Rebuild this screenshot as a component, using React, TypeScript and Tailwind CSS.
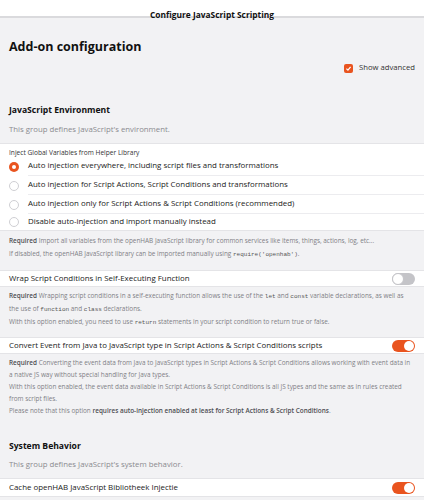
import type { ReactNode } from 'react';

const code = "font-['Liberation_Mono',monospace] text-[6px] leading-none text-[#555]";

function Radio({ checked }: { checked?: boolean }) {
  if (checked) {
    return <span className="w-[10px] h-[10px] rounded-full bg-[#e9541f] flex items-center justify-center shrink-0"><span className="w-[4px] h-[4px] rounded-full bg-white" /></span>;
  }
  return <span className="w-[10px] h-[10px] rounded-full border border-[#cfcfd3] bg-white shrink-0" />;
}

function Toggle({ on }: { on?: boolean }) {
  if (on) {
    return (
      <span className="w-[23px] h-[12px] rounded-full bg-[#e9541f] flex items-center justify-end pr-[1px]">
        <span className="w-[10px] h-[10px] rounded-full bg-white" />
      </span>
    );
  }
  return (
    <span className="w-[23px] h-[12px] rounded-full bg-[#c4c4c8] flex items-center">
      <span className="w-[12px] h-[12px] rounded-full bg-white border border-[#c4c4c8]" />
    </span>
  );
}

function ToggleRow({ label, on }: { label: string; on?: boolean }) {
  return (
    <div className="h-[17px] bg-white border-y border-[#e4e4e7] flex items-center justify-between pl-[9px] pr-[9px]">
      <span className="text-[7.9px] text-[#222]">{label}</span>
      <Toggle on={on} />
    </div>
  );
}

function Info({ lines, leading }: { lines: ReactNode[]; leading: string }) {
  return (
    <div className={`pl-[9px] text-[6.4px] text-[#808085] ${leading}`}>
      {lines.map((l, i) => (
        <div key={i} className="whitespace-nowrap">{l}</div>
      ))}
    </div>
  );
}

const options = [
  'Auto injection everywhere, including script files and transformations',
  'Auto injection for Script Actions, Script Conditions and transformations',
  'Auto injection only for Script Actions & Script Conditions (recommended)',
  'Disable auto-injection and import manually instead',
];

export default function App() {
  const req = <b className="font-semibold text-[#4d4d52]">Required</b>;

  return (
    <div className="w-[424px] h-[500px] overflow-hidden bg-[#f2f2f4] font-['Open_Sans',sans-serif] text-[#222]">
      {/* title bar */}
      <div className="h-[18px] bg-white border-b-2 border-[#dadadd] text-center">
        <span className="text-[8.4px] font-bold leading-[13px] text-[#111]">Configure JavaScript Scripting</span>
      </div>

      <div className="mt-[20px] pl-[9px] text-[12.5px] font-bold leading-[18px] text-[#111]">Add-on configuration</div>

      <div className="mt-[6px] h-[12px] flex items-center justify-end gap-[6px] pr-[9px]">
        <span className="w-[9px] h-[9px] rounded-[2px] bg-[#e9541f] flex items-center justify-center">
          <svg width="7" height="7" viewBox="0 0 10 10">
            <path d="M2 5.2 L4.2 7.4 L8 2.8" fill="none" stroke="white" strokeWidth="1.8" />
          </svg>
        </span>
        <span className="text-[7.7px] text-[#333]">Show advanced</span>
      </div>

      {/* JavaScript Environment */}
      <div className="mt-[29px] pl-[9px] text-[8.6px] font-bold leading-[14px] text-[#111]">JavaScript Environment</div>
      <div className="mt-[6px] pl-[9px] text-[7.8px] leading-[12px] text-[#8a8a8f]">This group defines JavaScript's environment.</div>

      <div className="mt-[8px] bg-white border-y border-[#e4e4e7]">
        <div className="pt-[4px] pl-[9px] text-[6.6px] leading-[9px] text-[#333]">Inject Global Variables from Helper Library</div>
        {options.map((o, i) => (
          <div key={o} className={`flex items-center ${i === 3 ? 'h-[16px]' : 'h-[19px]'}`}>
            <span className="w-[28px] pl-[9px] flex items-center shrink-0">
              <Radio checked={i === 0} />
            </span>
            <span className={`flex-1 h-full flex items-center text-[7.9px] text-[#222] ${i < 3 ? 'border-b border-[#ececef]' : ''}`}>{o}</span>
          </div>
        ))}
      </div>

      <div className="pt-[4px]">
        <Info
          leading="leading-[12.5px]"
          lines={[
            <>{req} Import all variables from the openHAB JavaScript library for common services like items, things, actions, log, etc...</>,
            <>If disabled, the openHAB JavaScript library can be imported manually using <span className={code}>require('openhab')</span>.</>,
          ]}
        />
      </div>

      <div className="mt-[10px]">
        <ToggleRow label="Wrap Script Conditions in Self-Executing Function" />
      </div>
      <div className="pt-[2px]">
        <Info
          leading="leading-[13px]"
          lines={[
            <>{req} Wrapping script conditions in a self-executing function allows the use of the <span className={code}>let</span> and <span className={code}>const</span> variable declarations, as well as</>,
            <>the use of <span className={code}>function</span> and <span className={code}>class</span> declarations.</>,
            <>With this option enabled, you need to use <span className={code}>return</span> statements in your script condition to return true or false.</>,
          ]}
        />
      </div>

      <div className="mt-[9px]">
        <ToggleRow label="Convert Event from Java to JavaScript type in Script Actions & Script Conditions scripts" on />
      </div>
      <div className="pt-[3px]">
        <Info
          leading="leading-[12px]"
          lines={[
            <>{req} Converting the event data from Java to JavaScript types in Script Actions &amp; Script Conditions allows working with event data in</>,
            <>a native JS way without special handling for Java types.</>,
            <>With this option enabled, the event data available in Script Actions &amp; Script Conditions is all JS types and the same as in rules created</>,
            <>from script files.</>,
            <>Please note that this option <b className="font-semibold text-[#4d4d52]">requires auto-injection enabled at least for Script Actions &amp; Script Conditions</b>.</>,
          ]}
        />
      </div>

      {/* System Behavior */}
      <div className="mt-[22px] pl-[9px] text-[8.6px] font-bold leading-[14px] text-[#111]">System Behavior</div>
      <div className="mt-[5px] pl-[9px] text-[7.8px] leading-[12px] text-[#8a8a8f]">This group defines JavaScript's system behavior.</div>

      <div className="mt-[8px]">
        <div className="h-[19px] bg-white border-y border-[#e4e4e7] flex items-center justify-between px-[9px]">
          <span className="text-[7.9px] text-[#222]">Cache openHAB JavaScript Bibliotheek Injectie</span>
          <Toggle on />
        </div>
      </div>
    </div>
  );
}
